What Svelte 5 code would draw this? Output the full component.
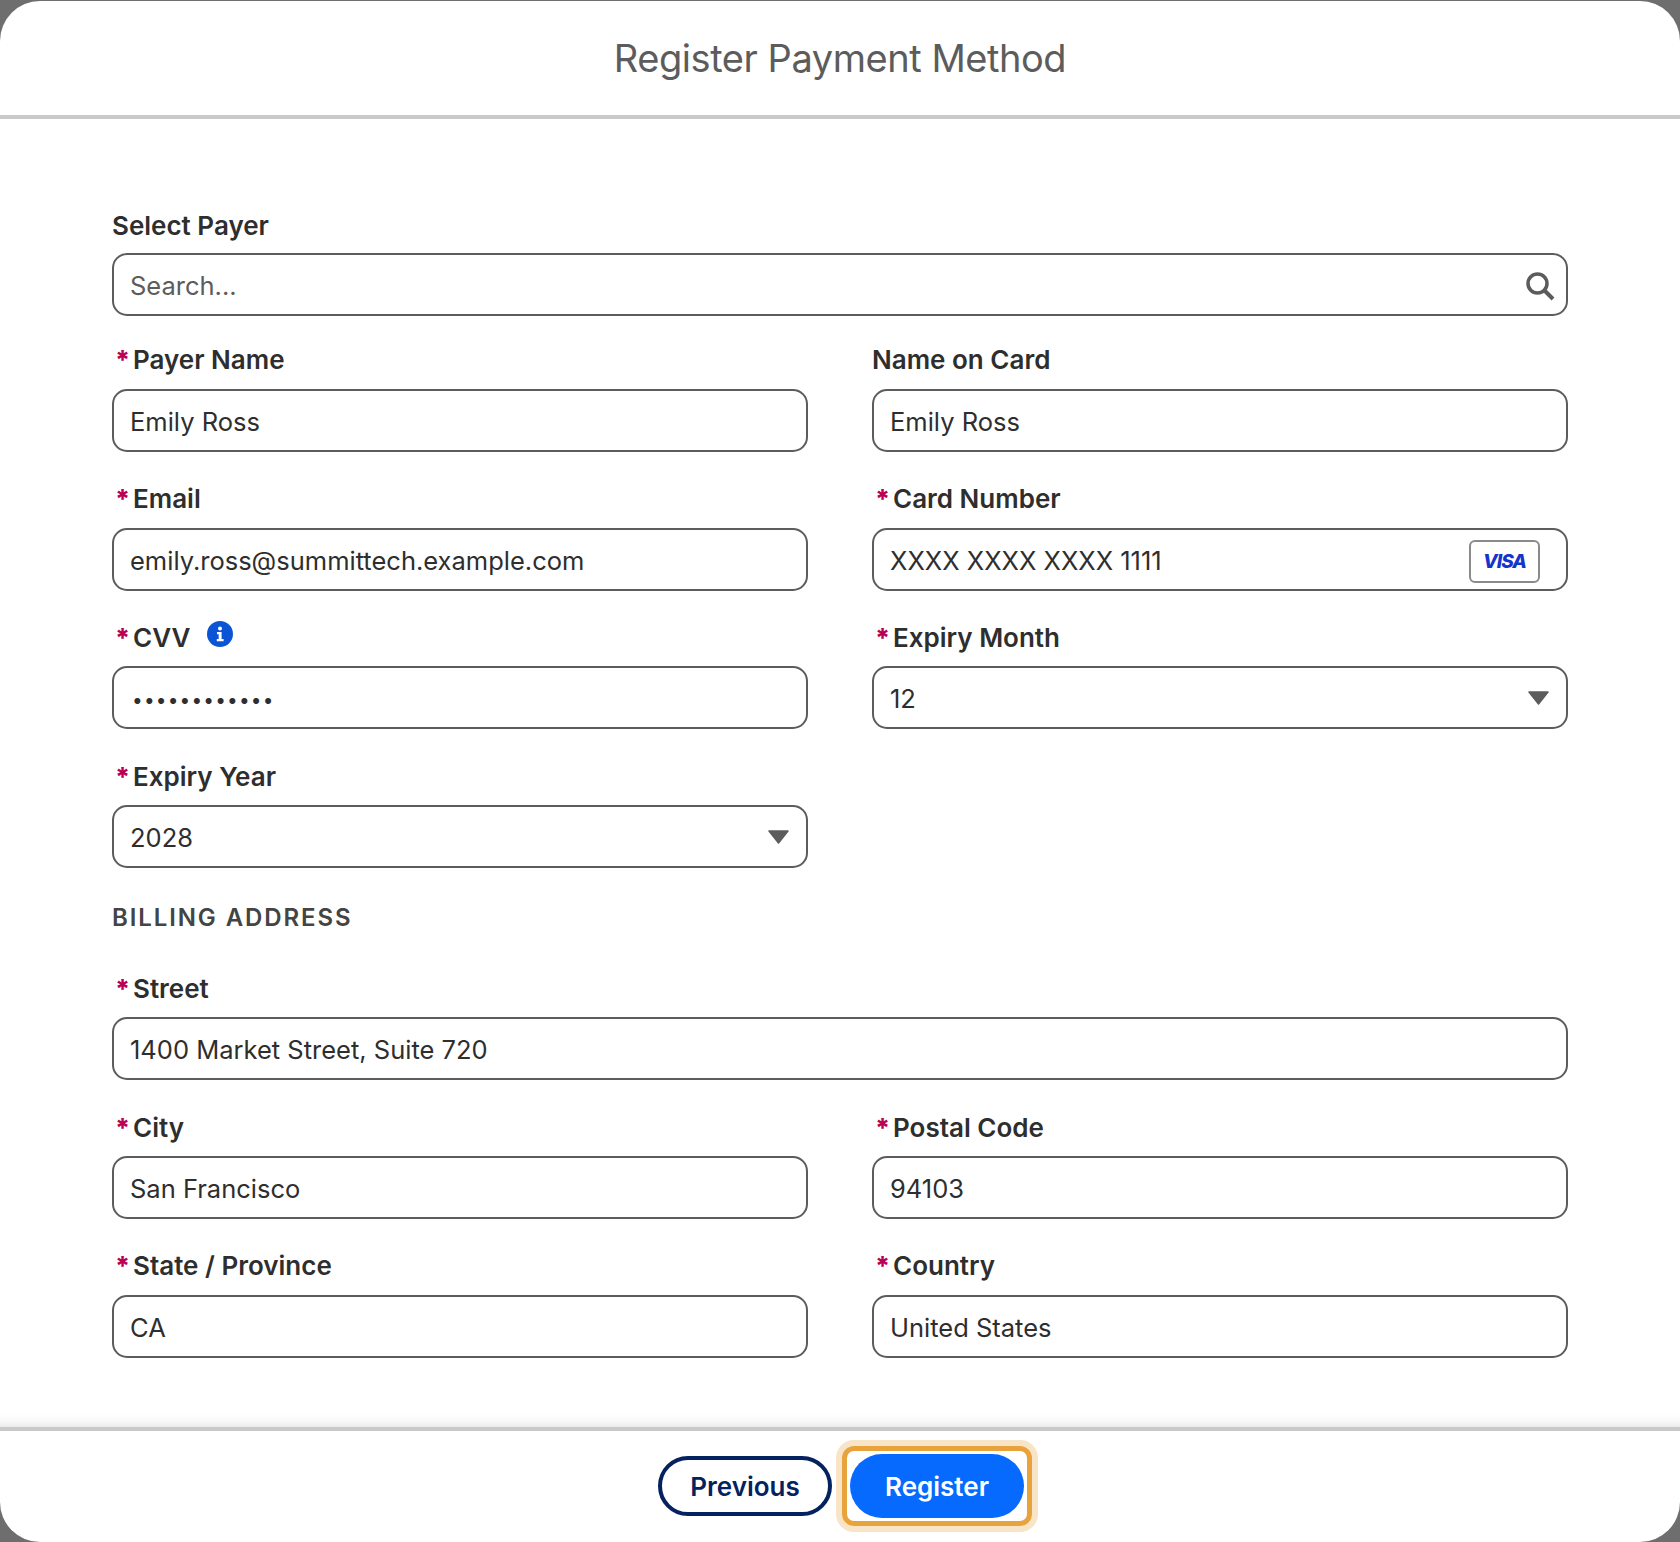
<script lang="ts">
  type Field = { label: string; value?: string; required?: boolean; kind?: string; wide?: boolean }

  const topFields: Field[] = [
    { label: 'Payer Name', value: 'Emily Ross', required: true },
    { label: 'Name on Card', value: 'Emily Ross' },
    { label: 'Email', value: 'emily.ross@summittech.example.com', required: true },
    { label: 'Card Number', value: 'XXXX XXXX XXXX 1111', required: true, kind: 'card' },
    { label: 'CVV', value: 'secretcvv123', required: true, kind: 'password' },
    { label: 'Expiry Month', value: '12', required: true, kind: 'select' },
    { label: 'Expiry Year', value: '2028', required: true, kind: 'select' },
  ]

  const addressFields: Field[] = [
    { label: 'Street', value: '1400 Market Street, Suite 720', required: true, wide: true },
    { label: 'City', value: 'San Francisco', required: true },
    { label: 'Postal Code', value: '94103', required: true },
    { label: 'State / Province', value: 'CA', required: true },
    { label: 'Country', value: 'United States', required: true },
  ]
</script>

{#snippet field(f: Field)}
  <div class="field" class:wide={f.wide}>
    <div class="label">
      {#if f.required}<span class="req">*</span>{/if}
      <span>{f.label}</span>
      {#if f.kind === 'password'}
        <svg class="info" viewBox="0 0 26 26" aria-hidden="true">
          <circle cx="13" cy="13" r="13" fill="#0b54d6" />
          <circle cx="13" cy="7.600" r="2" fill="#fff" />
          <path d="M10 11h4.600v7h2v2.200H9.800V18h1.900v-4.800H10z" fill="#fff" />
        </svg>
      {/if}
    </div>
    <div class="control">
      <input type={f.kind === 'password' ? 'password' : 'text'} value={f.value} readonly class:dots={f.kind === 'password'} />
      {#if f.kind === 'card'}
        <span class="visa">VISA</span>
      {:else if f.kind === 'select'}
        <svg class="caret" viewBox="0 0 21 14" aria-hidden="true">
          <path d="M1 1h19l-9.500 12z" fill="#5c5c5c" stroke="#5c5c5c" stroke-width="1.500" stroke-linejoin="round" />
        </svg>
      {/if}
    </div>
  </div>
{/snippet}

<div class="modal">
  <header>
    <h1>Register Payment Method</h1>
  </header>

  <main>
    <div class="search">
      <div class="label">Select Payer</div>
      <div class="control">
        <input type="text" placeholder="Search..." readonly />
        <svg class="glass" viewBox="0 0 30 30" aria-hidden="true">
          <circle cx="12.500" cy="12.500" r="9.500" fill="none" stroke="#5c5c5c" stroke-width="3.500" />
          <path d="M19.500 19.500 28 28" fill="none" stroke="#5c5c5c" stroke-width="4" />
        </svg>
      </div>
    </div>

    <div class="grid">
      {#each topFields as f}
        {@render field(f)}
      {/each}
    </div>

    <h2>BILLING ADDRESS</h2>

    <div class="grid">
      {#each addressFields as f}
        {@render field(f)}
      {/each}
    </div>
  </main>

  <footer>
    <button class="prev">Previous</button>
    <span class="focus"><button class="primary">Register</button></span>
  </footer>
</div>

<style>
  :global(body) {
    margin: 0;
    background: #6e6e6e;
  }

  .modal {
    display: flex;
    flex-direction: column;
    box-sizing: border-box;
    height: 1541px;
    margin-top: 1px;
    overflow: hidden;
    border-radius: 40px;
    background: #fff;
    font-family: Inter, "Liberation Sans", sans-serif;
    color: #2e2e2e;
  }

  header {
    display: flex;
    align-items: center;
    justify-content: center;
    box-sizing: border-box;
    flex: none;
    height: 118px;
    border-bottom: 4px solid #c9c9c9;
  }

  h1 {
    margin: 0;
    font-size: 38px;
    font-weight: 400;
    letter-spacing: -0.45px;
    color: #5c5c5c;
  }

  main {
    flex: 1;
    padding: 91px 112px 0;
    box-shadow: inset 0 -14px 14px -14px rgba(0, 0, 0, 0.16);
  }

  .search {
    padding-bottom: 7px;
  }

  .search .label {
    margin-bottom: 13px;
  }

  .grid {
    display: grid;
    grid-template-columns: 695.5px 696px;
    column-gap: 64.5px;
  }

  .wide {
    grid-column: 1 / -1;
  }

  .field {
    padding: 21.75px 0 10px;
  }

  .label {
    display: flex;
    align-items: center;
    height: 30px;
    margin-bottom: 14px;
    font-size: 26px;
    font-weight: 600;
    color: #2e2e2e;
  }

  .req {
    box-sizing: border-box;
    width: 21px;
    padding-left: 3px;
    color: #ba0052;
    font-size: 26px;
    font-weight: 800;
  }

  .info {
    width: 26px;
    height: 26px;
    margin-top: -7px;
    margin-left: 17px;
  }

  .control {
    position: relative;
  }

  input {
    display: block;
    box-sizing: border-box;
    width: 100%;
    height: 63px;
    padding: 2px 16px 0;
    border: 2px solid #5c5c5c;
    border-radius: 15px;
    outline: none;
    background: #fff;
    font: 400 25.500px Inter, "Liberation Sans", sans-serif;
    color: #2e2e2e;
  }

  input::placeholder {
    color: #5c5c5c;
    opacity: 1;
  }

  .dots {
    padding: 5px 16px 0 18px;
    font-size: 19px;
    letter-spacing: 1.200px;
  }

  .glass {
    position: absolute;
    top: 18px;
    right: 13px;
    width: 30px;
    height: 30px;
  }

  .caret {
    position: absolute;
    top: 25px;
    right: 19px;
    width: 21px;
    height: 14px;
  }

  .visa {
    position: absolute;
    top: 12px;
    right: 28px;
    display: flex;
    align-items: center;
    justify-content: center;
    box-sizing: border-box;
    width: 71px;
    height: 43px;
    border: 2.500px solid #8a8a8a;
    border-radius: 6px;
    color: #1434cb;
    font-size: 19px;
    font-style: italic;
    font-weight: 800;
    letter-spacing: -1px;
  }

  h2 {
    margin: 0 0 19px;
    padding: 24.500px 0 0;
    font-size: 24px;
    line-height: 30px;
    font-weight: 600;
    letter-spacing: 1.900px;
    color: #444;
  }

  footer {
    display: flex;
    flex: none;
    align-items: center;
    justify-content: center;
    gap: 10px;
    box-sizing: border-box;
    height: 115px;
    padding: 0 0 2px 10px;
    border-top: 4px solid #c9c9c9;
  }

  button {
    box-sizing: border-box;
    padding: 2px 0 0;
    border-radius: 32px;
    font-family: inherit;
    font-size: 26px;
    font-weight: 600;
  }

  .prev {
    width: 174px;
    height: 60px;
    border: 4px solid #03225f;
    background: #fff;
    color: #03225f;
  }

  .focus {
    display: flex;
    padding: 3px;
    border: 5px solid #e8a33d;
    border-radius: 12px;
    box-shadow: 0 0 0 6px #f8e4c6;
  }

  .primary {
    width: 174px;
    height: 64px;
    border: none;
    background: #066afe;
    color: #fff;
  }
</style>
